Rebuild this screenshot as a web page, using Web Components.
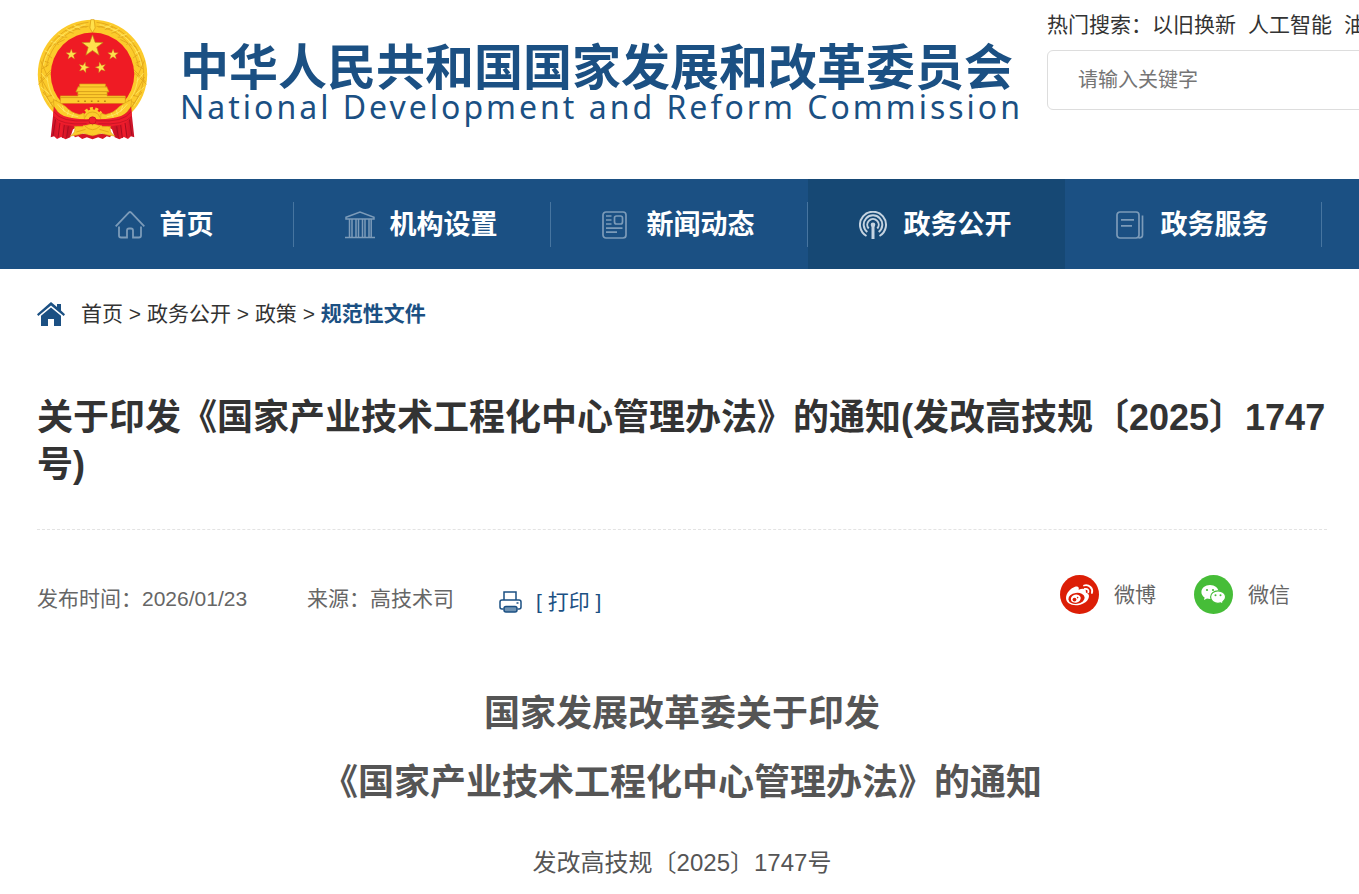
<!DOCTYPE html>
<html lang="zh-CN">
<head>
<meta charset="utf-8">
<meta name="viewport" content="width=device-width, initial-scale=1">
<title>国家发展和改革委员会</title>
<style>
  :root { --brand: #1b5083; --brand-dark: #164874; --gutter: 37px; --text: #333; --muted: #666; }
  body { margin: 0; overflow-x: hidden; background: #fff; color: var(--text); font: 400 21px/30px "Liberation Sans", "Noto Sans CJK SC", sans-serif; text-spacing-trim: space-all; }
</style>
</head>
<body>
<site-header>
  <site-logo slot="logo">
    <span slot="name">中华人民共和国国家发展和改革委员会</span>
    <span slot="english">National Development and Reform Commission</span>
  </site-logo>
  <search-box placeholder="请输入关键字" words="以旧换新,人工智能,油价">热门搜索：</search-box>
</site-header>
<site-nav>
  <nav-item icon="home">首页</nav-item>
  <nav-item icon="org">机构设置</nav-item>
  <nav-item icon="news">新闻动态</nav-item>
  <nav-item icon="signal" active>政务公开</nav-item>
  <nav-item icon="service">政务服务</nav-item>
</site-nav>
<main>
  <crumb-trail items="首页,政务公开,政策" current="规范性文件"></crumb-trail>
  <article-head>
    <span slot="title">关于印发《国家产业技术工程化中心管理办法》的通知(发改高技规〔2025〕1747号)</span>
    <span slot="info">发布时间：2026/01/23</span>
    <span slot="info">来源：高技术司</span>
    <print-button slot="print">[ 打印 ]</print-button>
    <share-link slot="share" icon="weibo">微博</share-link>
    <share-link slot="share" icon="wechat">微信</share-link>
  </article-head>
  <article-body>
    <span slot="heading">国家发展改革委关于印发<br>《国家产业技术工程化中心管理办法》的通知</span>
    <span slot="number">发改高技规〔2025〕1747号</span>
  </article-body>
</main>

<script>
const ICONS = {
  home: `<svg viewBox="0 0 30 28" fill="none" stroke="currentColor" stroke-width="1.8"><path d="M.7 15.3 14 1.5q1-.9 2 0l13.3 13.8M4 15.5v9q0 2 2 2h6v-7q0-2 2-2h2q2 0 2 2v7h6q2 0 2-2v-9"/></svg>`,
  org: `<svg viewBox="0 0 30 28" fill="none" stroke="currentColor" stroke-width="1.5"><path d="M1 6.2 15 1l14 5.2v1.7H1zM0 26.5h30M4.5 8v18M7 8v18M11 8v18M13.5 8v18M17.5 8v18M20 8v18M24 8v18M26.2 8v18"/></svg>`,
  news: `<svg viewBox="0 0 30 28" fill="none" stroke="currentColor" stroke-width="1.7"><rect x="1" y="1" width="23" height="26" rx="3"/><rect x="12.5" y="5" width="8" height="8" rx="2"/><path d="M4 5h5.5M4 9h5.5M4 13h5.5M4 17.2h16.5M4 21.2h11"/></svg>`,
  signal: `<svg viewBox="0 0 30 28" fill="none" stroke="currentColor" stroke-width="2"><path d="M7.5 25A13 13 0 1 1 20.5 25M8.3 21A9.3 9.3 0 1 1 19.700 21M9.7 17.5A5.7 5.7 0 1 1 18.3 17.5"/><circle cx="14" cy="13.8" r="2.3" fill="currentColor" stroke="none"/><path stroke-width="3" d="M14 14v14"/></svg>`,
  service: `<svg viewBox="0 0 30 28" fill="none" stroke="currentColor" stroke-width="1.7"><rect x="1" y="1" width="22" height="26" rx="3"/><path d="M5 8.8h13M5 14.8h11M26.500 4.500V24q0 3-4 3"/></svg>`,
  house: `<svg viewBox="0 0 28 25" fill="currentColor"><path d="M14 0 20 5V2h4v6.5l4 3.7-1.3 1.7L14 3.5 1.3 13.9 0 12.2z"/><path d="M14 5.5 24 13.7V24h-7v-7h-6v7H4V13.7z"/></svg>`,
  printer: `<svg viewBox="0 0 23 22" fill="none" stroke="currentColor" stroke-width="1.5"><path d="M5 9V1h12v8M4.5 18H3q-2 0-2-2v-5q0-2 2-2h17q2 0 2 2v5q0 2-2 2h-1.500"/><rect x="5" y="15.500" width="13" height="5.500" rx="2" fill="#6f93b3"/><path d="M17.500 12h2"/></svg>`,
  weibo: `<svg viewBox="0 0 39 39"><circle cx="19.500" cy="19.500" r="19.500" fill="#dc1e06"/><path fill="#fff" d="M6 23c0-5 5-10 9-11.300 3-1 4.500.5 3.600 3.100 4.200-1.800 7.900-1.300 7.300 2.600 2.300.8 3.500 2.200 3 4.500-.9 5.200-7.400 8.300-13 8.300C10 30.200 6 27.500 6 23z"/><ellipse cx="16.500" cy="23.400" rx="8.200" ry="5.500" transform="rotate(-8 16.500 23.400)" fill="#dc1e06"/><ellipse cx="15.800" cy="23.600" rx="5" ry="4.100" transform="rotate(-15 15.800 23.600)" fill="#fff"/><circle cx="14.500" cy="24.600" r="1.900" fill="#dc1e06"/><circle cx="17.600" cy="22.600" r=".8" fill="#dc1e06"/><path fill="none" stroke="#fff" stroke-width="1.800" stroke-linecap="round" d="M24 10.500c5-1.500 9.500 3 7.900 7.500M24.800 14c2.600-.6 4.300 1.200 3.500 3.300"/></svg>`,
  wechat: `<svg viewBox="0 0 39 39"><circle cx="19.500" cy="19.500" r="19.500" fill="#46bd38"/><path fill="#fff" d="M16 10c-4.800 0-8.600 3-8.600 7 0 2.300 1.200 4.200 3.200 5.500L10 25l3-1.500c1 .3 2 .5 3 .5 4.800 0 8.600-3.200 8.600-7S20.800 10 16 10z"/><path fill="#fff" stroke="#46bd38" stroke-width="1.200" d="M24 15.800c-4.200 0-7.400 2.700-7.400 6.200s3.200 6.300 7.400 6.300c.9 0 1.800-.1 2.600-.4l2.600 1.400-.5-2.300c1.800-1.200 2.900-3 2.900-5 0-3.500-3.400-6.200-7.600-6.200z"/><g fill="#46bd38"><circle cx="13" cy="15" r="1.100"/><circle cx="19" cy="15" r="1.100"/><circle cx="21.500" cy="20.200" r="1"/><circle cx="26.500" cy="20.200" r="1"/></g></svg>`
};

// the wreath and the drapes are mirrored around x = 217
const EMBLEM = `
  <svg viewBox="50 25 334 365" role="img" aria-label="国徽">
    <defs>
      <path id="star" d="M0-33 8-10.500 32-10 13 4.500 20 28 0 14-20 28-13 4.500-32-10-8-10.500z"/>
      <linearGradient id="drape" x2="1"><stop offset="0" stop-color="#c41228"/><stop offset=".35" stop-color="#f01c2b"/><stop offset=".6" stop-color="#c81225"/><stop offset="1" stop-color="#ee1d2c"/></linearGradient>
      <g id="wreath">
        <path fill="none" stroke="#dfa41a" stroke-width="2.500" d="M205 35C135 42 70 100 63 180c-3 45 12 80 40 115M205 47C145 53 90 100 78 170M60 150l23 52M57 215l40-42M54 222l44-42M68 245l35 52M60 200l32 58M85 110l48-23M95 92l20 10M115 78l26 2M135 60l25 8M155 51l25 6M175 43l24 7M75 128l20 15M67 150l20 8M65 175l20-12M75 260l22-5M85 280l25-10"/>
        <path fill="none" stroke="#ffe763" stroke-width="2.500" d="M196 42C140 52 82 98 69 165M160 43l20 10M137 54l20 9M113 70l20 7M91 92l18 6M73 120l16 9M63 188l20 25M61 230l27 22M72 254l20 33M80 198q2 38 22 67"/>
      </g>
      <g id="side">
        <path fill="url(#drape)" d="M101 289 91 382l10-3 9 8 12-6 14 7 14-6 8-24 22-16-40-30z"/>
        <path fill="none" stroke="#a80d20" stroke-width="3" d="M106 325l-8 52M119 338l-6 44M132 345l-5 39M144 349l-5 34"/>
        <path fill="#fccb2b" stroke="#dba019" stroke-width="2" d="M99 268l20 10 18 12q15 18 40 23l14-3 2 18-30 4q-40-6-62-42z"/>
        <path fill="none" stroke="#fff07a" stroke-width="2" d="M112 282q24 33 62 38M126 287l6 18M145 300l-4 14M160 309l-6 14"/>
        <path fill="#ef1d2c" d="M101 289q12 40 106 38l10 12q-20 14-60 9-45-5-59-30z"/>
        <path fill="none" stroke="#b80f22" stroke-width="2" d="M101 305q22 33 103 27M99 319q24 27 100 22"/>
        <path fill="#fccb2b" stroke="#dba019" stroke-width="2" d="M217 340l-30 10-24-1q5 18-13 29 22-2 39-8l28 7z"/>
      </g>
    </defs>
    <circle cx="217" cy="192" r="165" fill="#fccb2b"/>
    <use href="#wreath"/><use href="#wreath" transform="matrix(-1 0 0 1 434 0)"/>
    <path d="M212 27h10l3 25-8 14-8-14z" fill="#ffe04a" stroke="#d49a10" stroke-width="2"/>
    <circle cx="217" cy="192" r="126" fill="#ef1b24"/>
    <g fill="#ffe04d" stroke="#bf8514" stroke-width="2">
      <use href="#star" transform="translate(217 106)"/>
      <use href="#star" transform="translate(153 132) scale(.5)"/>
      <use href="#star" transform="translate(279 132) scale(.5)"/>
      <use href="#star" transform="translate(191 171) rotate(15) scale(.5)"/>
      <use href="#star" transform="translate(242 171) rotate(-15) scale(.5)"/>
    </g>
    <path fill="#fdcb2d" stroke="#d79a15" stroke-width="2" d="M178 221h78v8h4l7 16h-6v12h55v23H120v-23h53v-12h-6l7-16h4z"/>
    <path stroke="#c88b12" stroke-width="2" d="M174 230h86M168 244h98M172 253h90M121 262h194"/>
    <path stroke="#b97c14" stroke-width="5" stroke-dasharray="5 15" d="M172 273h90"/>
    <path fill="#ef1b24" d="M118 281h198l-12 30-87 50-87-50z"/>
    <path fill="#d81526" d="M158 372h118l-6 10-10-3-12 8-14-5-17 6-17-6-14 5-12-8-10 3z"/>
    <circle cx="217" cy="324" r="27" fill="#fccb2b"/>
    <circle cx="217" cy="324" r="29" fill="none" stroke="#fccb2b" stroke-width="9" stroke-dasharray="9 7"/>
    <path fill="none" stroke="#d99a12" stroke-width="2" d="M195 322a23 23 0 0 1 44 0"/>
    <use href="#side"/><use href="#side" transform="matrix(-1 0 0 1 434 0)"/>
    <path fill="#fccb2b" d="M188 346h58l-5 16-8 3-4 9h-24l-4-9-8-3z"/>
    <path fill="none" stroke="#d99a12" stroke-width="2" d="M194 348q23 22 46 0M168 366l28-8M266 366l-28-8"/>
    <circle cx="217" cy="331" r="11" fill="#f01e2a" stroke="#bb1020" stroke-width="2"/>
  </svg>`;

class BaseElement extends HTMLElement {
  constructor() {
    super();
    this.attachShadow({ mode: 'open' });
  }

  connectedCallback() {
    this.shadowRoot.innerHTML = this.render();
  }

  list(name) {
    return (this.getAttribute(name) || '').split(',');
  }
}

class SiteHeader extends BaseElement {
  render() {
    return `
      <style>
        :host { display: block; overflow: hidden; }
        header { display: flex; align-items: flex-start; gap: 24px; padding: 10px 0 39px var(--gutter); }
        ::slotted(*) { flex: none; }
      </style>
      <header><slot name="logo"></slot><slot></slot></header>
    `;
  }
}

class SiteLogo extends BaseElement {
  render() {
    return `
      <style>
        :host { display: block; color: var(--brand); }
        a { display: flex; gap: 32px; padding-top: 9px; color: inherit; text-decoration: none; white-space: nowrap; }
        svg { display: block; width: 111px; height: 121px; }
        .words { display: grid; align-content: start; padding-top: 25px; }
        slot { display: block; }
        .name { font-size: 49px; line-height: 48px; font-weight: 700; }
        .english { font: 400 32px/30px "Noto Sans", "Open Sans", sans-serif; letter-spacing: 3px; }
      </style>
      <a href="#">
        ${EMBLEM}
        <div class="words">
          <slot class="name" name="name"></slot>
          <slot class="english" name="english"></slot>
        </div>
      </a>
    `;
  }
}

class SearchBox extends BaseElement {
  render() {
    const links = this.list('words').map((word) => `<a href="#">${word}</a>`).join('');
    return `
      <style>
        :host { display: grid; gap: 10px; min-width: 480px; }
        .hot { display: flex; white-space: nowrap; }
        .links { display: flex; gap: 12px; }
        a { color: inherit; text-decoration: none; }
        input { box-sizing: border-box; width: 100%; height: 60px; padding: 0 30px; border: 1px solid #ddd; border-radius: 6px; background: #fff; color: var(--text); font: inherit; font-size: 20px; outline: none; }
        input::placeholder { color: #757575; }
      </style>
      <div class="hot"><slot></slot><div class="links">${links}</div></div>
      <input type="search" aria-label="${this.getAttribute('placeholder')}" placeholder="${this.getAttribute('placeholder')}">
    `;
  }
}

class SiteNav extends BaseElement {
  render() {
    return `
      <style>
        :host { display: block; background: var(--brand); }
        nav { display: flex; padding: 0 var(--gutter); }
        ::slotted(*) { flex: 1; }
      </style>
      <nav><slot></slot></nav>
    `;
  }
}

class NavItem extends BaseElement {
  render() {
    return `
      <style>
        :host { display: block; color: #fff; font-size: 27px; font-weight: 700; }
        :host([active]) { background: var(--brand-dark); }
        a { display: flex; align-items: center; padding: 23px 0 22px; color: inherit; text-decoration: none; white-space: nowrap; }
        .label { display: flex; flex: 1; align-items: center; justify-content: center; gap: 15px; height: 45px; padding-right: 2px; border-right: 1px solid #4775a0; }
        :host([active]) .label { border-color: transparent; }
        svg { display: block; width: 30px; height: 28px; color: #7c9bb9; }
        :host([active]) svg { color: #c5d3e0; }
      </style>
      <a href="#"><span class="label">${ICONS[this.getAttribute('icon')]}<slot></slot></span></a>
    `;
  }
}

class CrumbTrail extends BaseElement {
  render() {
    const links = this.list('items').map((item) => `<a href="#">${item}</a> &gt; `).join('');
    return `
      <style>
        :host { display: block; padding: 30px var(--gutter) 0; }
        nav { display: flex; align-items: center; gap: 16px; }
        svg { display: block; width: 28px; height: 25px; color: var(--brand); }
        a { color: inherit; text-decoration: none; }
        .current { color: var(--brand); font-weight: 700; }
      </style>
      <nav aria-label="当前位置">${ICONS.house}<div>${links}<a class="current" href="#">${this.getAttribute('current')}</a></div></nav>
    `;
  }
}

class ArticleHead extends BaseElement {
  render() {
    return `
      <style>
        :host { display: block; padding: 65px 32px 0 var(--gutter); }
        h1 { margin: 0; padding-bottom: 41px; border-bottom: 1px dashed #e3e3e3; font-size: 36px; line-height: 47px; font-weight: 700; }
        .meta { display: flex; justify-content: space-between; padding-top: 45px; color: var(--muted); }
        .info, .share { display: flex; align-items: flex-start; }
        .info { gap: 60px; line-height: 48px; }
        .share { gap: 38px; padding-right: 37px; }
      </style>
      <h1><slot name="title"></slot></h1>
      <div class="meta">
        <div class="info"><slot name="info"></slot><slot name="print"></slot></div>
        <div class="share"><slot name="share"></slot></div>
      </div>
    `;
  }
}

class PrintButton extends BaseElement {
  render() {
    return `
      <style>
        :host { display: block; margin-left: -15px; color: var(--brand); }
        button { display: flex; align-items: center; gap: 14px; padding: 3px 0 0; border: 0; background: none; color: inherit; font: inherit; cursor: pointer; }
        svg { display: block; width: 23px; height: 22px; }
      </style>
      <button type="button">${ICONS.printer}<slot></slot></button>
    `;
  }

  connectedCallback() {
    super.connectedCallback();
    this.shadowRoot.querySelector('button').addEventListener('click', () => window.print());
  }
}

class ShareLink extends BaseElement {
  render() {
    return `
      <style>
        :host { display: block; }
        a { display: flex; align-items: center; gap: 15px; color: inherit; text-decoration: none; }
        svg { display: block; width: 39px; height: 39px; }
      </style>
      <a href="#">${ICONS[this.getAttribute('icon')]}<slot></slot></a>
    `;
  }
}

class ArticleBody extends BaseElement {
  render() {
    return `
      <style>
        :host { display: block; padding: 53px 32px 0 var(--gutter); color: #555; text-align: center; }
        h2 { margin: 0; font-size: 36px; line-height: 69px; font-weight: 700; }
        p { margin: 23px 0 0; font-size: 24px; line-height: 46px; }
      </style>
      <h2><slot name="heading"></slot></h2>
      <p><slot name="number"></slot></p>
    `;
  }
}

customElements.define('site-header', SiteHeader);
customElements.define('site-logo', SiteLogo);
customElements.define('search-box', SearchBox);
customElements.define('site-nav', SiteNav);
customElements.define('nav-item', NavItem);
customElements.define('crumb-trail', CrumbTrail);
customElements.define('article-head', ArticleHead);
customElements.define('print-button', PrintButton);
customElements.define('share-link', ShareLink);
customElements.define('article-body', ArticleBody);
</script>
</body>
</html>
